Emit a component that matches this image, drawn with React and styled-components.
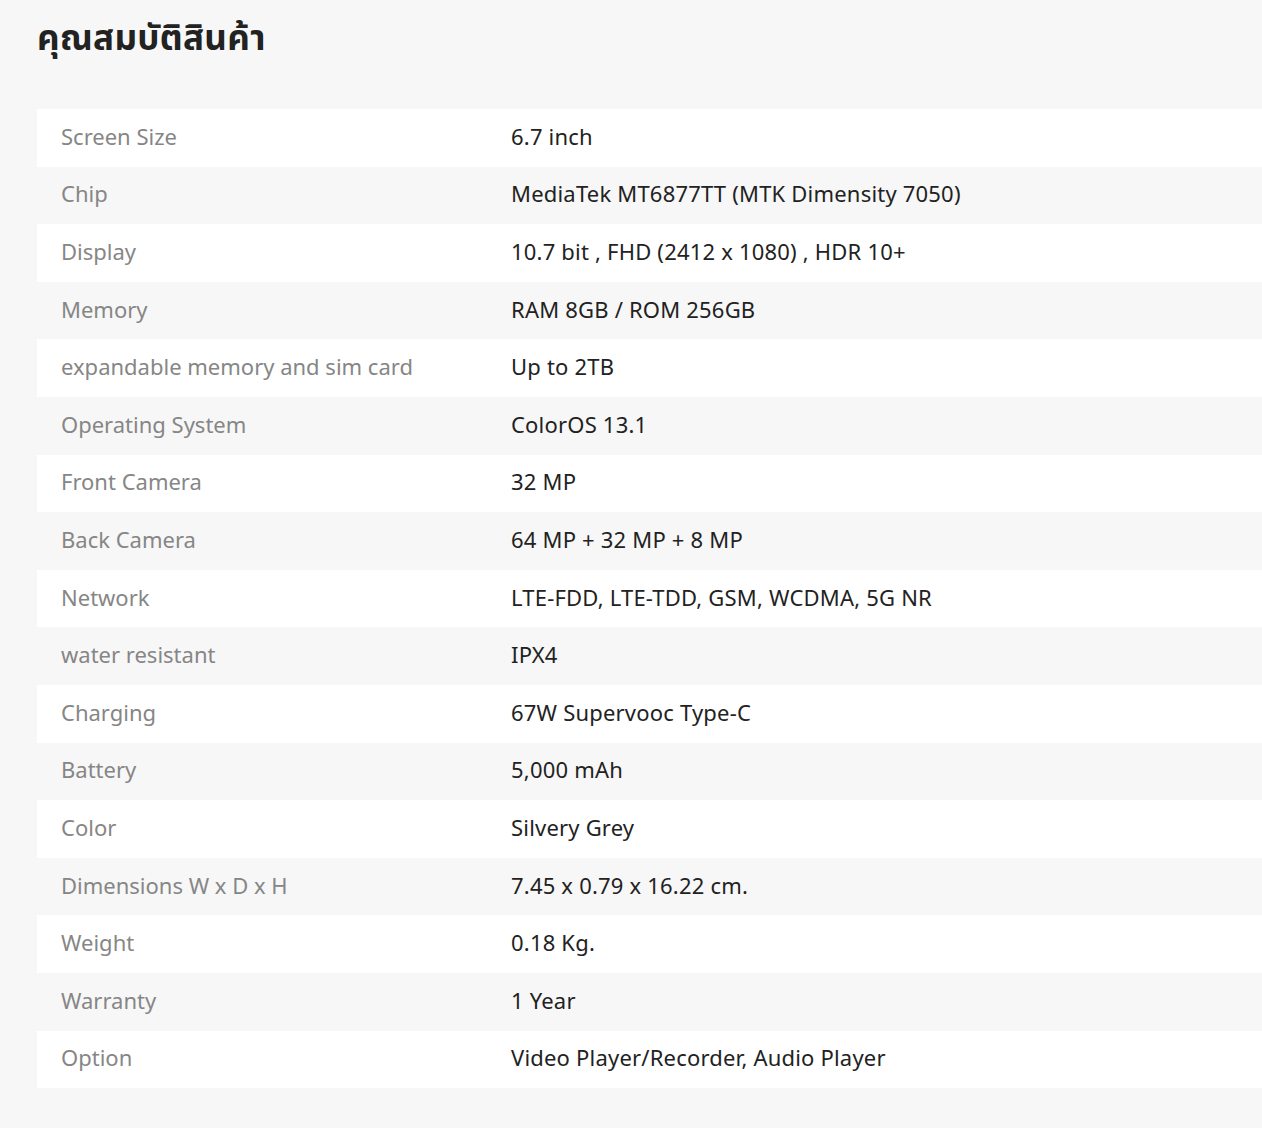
import React from 'react'
import styled, { createGlobalStyle } from 'styled-components'

const GlobalStyle = createGlobalStyle`
  html, body {
    margin: 0;
    padding: 0;
    background: #f7f7f7;
    overflow-x: hidden;
  }
  body {
    font-family: "Noto Sans", "Noto Sans Thai", sans-serif;
  }
`

const Page = styled.section`
  padding: 11px 0 40px 37px;
`

const Title = styled.h2`
  margin: 0 0 46px;
  font-size: 35px;
  font-weight: 700;
  line-height: 52px;
  letter-spacing: 0.3px;
  color: #222;
`

const Table = styled.div`
  display: flex;
  flex-direction: column;
  width: 100%;
`

const Row = styled.div`
  display: grid;
  grid-template-columns: 474px 1fr;
  align-items: center;
  box-sizing: border-box;
  height: 57.6px;
  padding-bottom: 4px;
  background: ${({ $odd }) => ($odd ? '#ffffff' : '#f7f7f7')};
`

const Label = styled.div`
  padding-left: 24px;
  font-size: 22px;
  color: #868686;
`

const Value = styled.div`
  font-size: 22px;
  letter-spacing: 0.2px;
  color: #222;
`

const specs = [
  ['Screen Size', '6.7 inch'],
  ['Chip', 'MediaTek MT6877TT (MTK Dimensity 7050)'],
  ['Display', '10.7 bit , FHD (2412 x 1080) , HDR 10+'],
  ['Memory', 'RAM 8GB / ROM 256GB'],
  ['expandable memory and sim card', 'Up to 2TB'],
  ['Operating System', 'ColorOS 13.1'],
  ['Front Camera', '32 MP'],
  ['Back Camera', '64 MP + 32 MP + 8 MP'],
  ['Network', 'LTE-FDD, LTE-TDD, GSM, WCDMA, 5G NR'],
  ['water resistant', 'IPX4'],
  ['Charging', '67W Supervooc Type-C'],
  ['Battery', '5,000 mAh'],
  ['Color', 'Silvery Grey'],
  ['Dimensions W x D x H', '7.45 x 0.79 x 16.22 cm.'],
  ['Weight', '0.18 Kg.'],
  ['Warranty', '1 Year'],
  ['Option', 'Video Player/Recorder, Audio Player'],
]

const App = () => {
  return (
    <>
      <GlobalStyle />
      <Page>
        <Title>คุณสมบัติสินค้า</Title>
        <Table>
          {specs.map(([label, value], i) => (
            <Row key={label} $odd={i % 2 === 0}>
              <Label>{label}</Label>
              <Value>{value}</Value>
            </Row>
          ))}
        </Table>
      </Page>
    </>
  )
}

export default App
